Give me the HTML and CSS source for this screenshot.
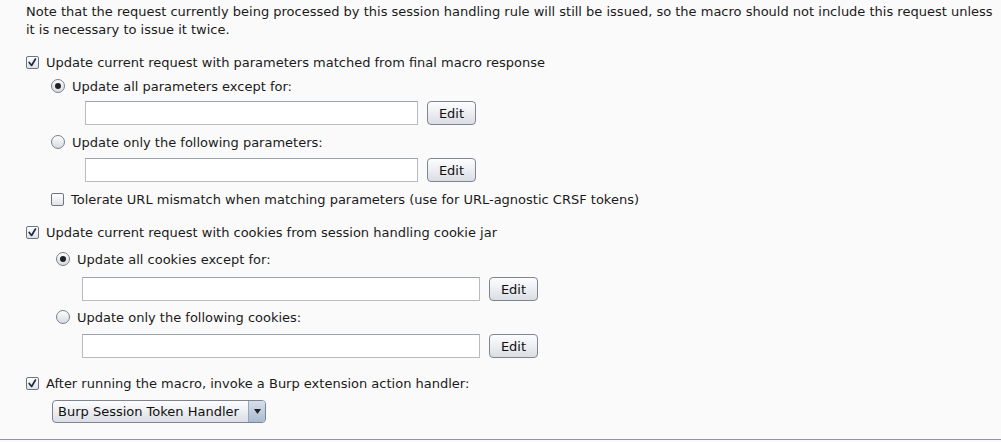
FILE: index.html
```html
<!DOCTYPE html>
<html>
<head>
<meta charset="utf-8">
<link rel="stylesheet" href="styles.css">
</head>
<body>
<div class="panel">
  <p class="note">Note that the request currently being processed by this session handling rule will still be issued, so the macro should not include this request unless it is necessary to issue it twice.</p>

  <div class="row cb1"><span class="check on"><svg viewBox="0 0 13 13"><path d="M2.6 6.4 L5.4 10 L10 2.4" fill="none" stroke="#1e2a40" stroke-width="2" stroke-linecap="round" stroke-linejoin="round"/></svg></span><span>Update current request with parameters matched from final macro response</span></div>

  <div class="row indent1 r1"><span class="radio on"></span><span>Update all parameters except for:</span></div>
  <div class="field-row indent2 f1"><span class="field w1"></span><span class="btn">Edit</span></div>

  <div class="row indent1 r2"><span class="radio"></span><span>Update only the following parameters:</span></div>
  <div class="field-row indent2 f2"><span class="field w1"></span><span class="btn">Edit</span></div>

  <div class="row indent1 tol"><span class="check"></span><span>Tolerate URL mismatch when matching parameters (use for URL-agnostic CRSF tokens)</span></div>

  <div class="row cb2"><span class="check on"><svg viewBox="0 0 13 13"><path d="M2.6 6.4 L5.4 10 L10 2.4" fill="none" stroke="#1e2a40" stroke-width="2" stroke-linecap="round" stroke-linejoin="round"/></svg></span><span>Update current request with cookies from session handling cookie jar</span></div>

  <div class="row indent3 r3"><span class="radio on"></span><span>Update all cookies except for:</span></div>
  <div class="field-row indent4 f3"><span class="field w2"></span><span class="btn">Edit</span></div>

  <div class="row indent3 r4"><span class="radio"></span><span>Update only the following cookies:</span></div>
  <div class="field-row indent4 f4"><span class="field w2"></span><span class="btn">Edit</span></div>

  <div class="row cb3"><span class="check on"><svg viewBox="0 0 13 13"><path d="M2.6 6.4 L5.4 10 L10 2.4" fill="none" stroke="#1e2a40" stroke-width="2" stroke-linecap="round" stroke-linejoin="round"/></svg></span><span>After running the macro, invoke a Burp extension action handler:</span></div>

  <div class="combo-row indent5"><div class="combo"><span class="combo-text">Burp Session Token Handler</span><span class="combo-arrow"><svg viewBox="0 0 7 5" width="7" height="5"><path d="M0 0 H7 L3.5 5 Z" fill="#222"/></svg></span></div></div>
</div>
<div class="bottom-line"></div>
</body>
</html>
```

FILE: styles.css
```css
html, body {
  margin: 0;
  padding: 0;
  background: #fafafa;
}
body {
  width: 1001px;
  height: 442px;
  overflow: hidden;
  font-family: "DejaVu Sans", sans-serif;
  font-size: 13px;
  color: #1a1a1a;
  display: flex;
  flex-direction: column;
}
.panel {
  padding: 3px 0 0 26px;
  height: 439px;
  box-sizing: border-box;
  display: flex;
  flex-direction: column;
}
.note {
  margin: 0;
  line-height: 18px;
  width: 970px;
}
.row {
  display: flex;
  align-items: center;
  height: 20px;
  gap: 7px;
}
.field-row {
  display: flex;
  align-items: center;
  height: 24px;
  gap: 9px;
}
.indent1 { padding-left: 25px; }
.indent2 { padding-left: 59px; }
.indent3 { padding-left: 30px; }
.indent4 { padding-left: 56px; }
.indent5 { padding-left: 26px; }

.cb1 { margin-top: 13px; }
.r1 { margin-top: 4px; }
.f1 { margin-top: 5px; }
.r2 { margin-top: 7px; }
.f2 { margin-top: 6px; }
.tol { margin-top: 7px; }
.cb2 { margin-top: 13px; }
.r3 { margin-top: 7px; }
.f3 { margin-top: 8px; }
.r4 { margin-top: 6px; }
.f4 { margin-top: 7px; }
.cb3 { margin-top: 15px; }
.combo-row { margin-top: 7px; display: flex; }

.check {
  width: 13px;
  height: 13px;
  box-sizing: border-box;
  border: 1px solid #6f747c;
  border-radius: 2px;
  background: linear-gradient(#ffffff, #dfe2e8);
  display: inline-flex;
  flex: none;
}
.check svg { width: 11px; height: 11px; display: block; }
.radio {
  width: 14px;
  height: 14px;
  box-sizing: border-box;
  border: 1px solid #7a7f87;
  border-radius: 50%;
  background: linear-gradient(#fdfdfd, #d7dae0);
  display: inline-flex;
  align-items: center;
  justify-content: center;
  flex: none;
}
.radio.on::after {
  content: "";
  width: 6px;
  height: 6px;
  border-radius: 50%;
  background: #1f2124;
}
.field {
  height: 24px;
  box-sizing: border-box;
  border: 1px solid #b8bcc2;
  border-top-color: #9ea3aa;
  background: #ffffff;
  display: block;
}
.w1 { width: 333px; }
.w2 { width: 398px; }
.btn {
  width: 49px;
  height: 24px;
  box-sizing: border-box;
  border: 1px solid #80868f;
  border-radius: 4px;
  background: linear-gradient(#fdfdfe, #eceef2 50%, #dadde4);
  display: flex;
  align-items: center;
  justify-content: center;
  color: #111;
}
.combo {
  width: 214px;
  height: 23px;
  box-sizing: border-box;
  border: 1px solid #7d848f;
  border-radius: 4px;
  background: linear-gradient(#fdfdfe, #eceef2 50%, #dadde4);
  display: flex;
  align-items: stretch;
  overflow: hidden;
}
.combo-text {
  flex: 1;
  display: flex;
  align-items: center;
  padding-left: 5px;
  color: #111;
}
.combo-arrow {
  width: 16px;
  border-left: 1px solid #9aa6b6;
  background: linear-gradient(#d6dfeb, #a9bbd0);
  display: flex;
  align-items: center;
  justify-content: center;
}
.bottom-line {
  height: 1px;
  background: #8e97a6;
}
```
